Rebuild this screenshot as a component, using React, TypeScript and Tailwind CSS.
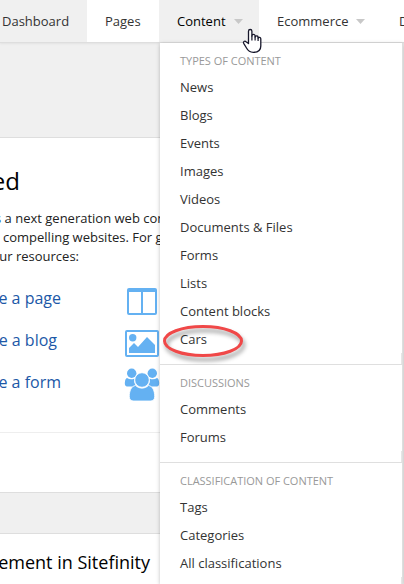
import type { ReactNode } from 'react';

const groups = [
  {
    title: 'TYPES OF CONTENT',
    items: ['News', 'Blogs', 'Events', 'Images', 'Videos', 'Documents & Files', 'Forms', 'Lists', 'Content blocks', 'Cars'],
  },
  { title: 'DISCUSSIONS', items: ['Comments', 'Forums'] },
  { title: 'CLASSIFICATION OF CONTENT', items: ['Tags', 'Categories', 'All classifications'] },
];

function Caret() {
  return (
    <svg width="9" height="5" viewBox="0 0 9 5" className="ml-2 shrink-0">
      <path d="M0 0h9L4.5 5z" fill="#c8c8c8" />
    </svg>
  );
}

function PageIcon() {
  return (
    <svg width="36" height="36" viewBox="0 0 36 36" fill="#64b1f2">
      <path fillRule="evenodd" d="M5 5h26a2 2 0 0 1 2 2v23a2 2 0 0 1-2 2H5a2 2 0 0 1-2-2V7a2 2 0 0 1 2-2zM5 9v21h12V9zM19 9v21h12V9z" />
    </svg>
  );
}

function ImageIcon() {
  return (
    <svg width="36" height="36" viewBox="0 0 36 36" fill="#64b1f2">
      <path fillRule="evenodd" d="M3 5h30a2 2 0 0 1 2 2v23a2 2 0 0 1-2 2H3a2 2 0 0 1-2-2V7a2 2 0 0 1 2-2zM3 7v23h30V7z" />
      <circle cx="8.7" cy="12.8" r="3.7" />
      <path d="M5 28v-5l5-5 4 4 9-10 8 8v8z" />
    </svg>
  );
}

function UsersIcon() {
  return (
    <svg width="36" height="36" viewBox="0 0 36 36" fill="#64b1f2">
      <circle cx="7.7" cy="6.2" r="4.7" />
      <circle cx="28.3" cy="6.2" r="4.7" />
      <path d="M3 11c2.500 1.700 5 1.700 7.500.5-.8 3.500 0 6 2.500 8H4c-3 0-3.500-2-3-5 .2-2 .8-3 2-3.500zM33 11c-2.500 1.700-5 1.700-7.500.5.8 3.500 0 6-2.500 8h9c3 0 3.500-2 3-5-.2-2-.8-3-2-3.500z" />
      <path d="M11.500 18.500c4 3.500 9 3.500 13 0 4.500.5 6.200 6 6.200 11 0 3-1.700 4.500-4.500 4.500H9.800c-2.800 0-4.500-1.500-4.500-4.500 0-5 1.700-10.500 6.200-11z" stroke="#fff" strokeWidth=".8" />
      <circle cx="18" cy="13" r="7.300" stroke="#fff" strokeWidth=".9" />
    </svg>
  );
}

function ResourceRow({ label, labelWidth, icon }: { label: string; labelWidth: string; icon: ReactNode }) {
  return (
    <div className="flex h-[42px] items-center">
      <div className="w-[124px]">
        <div className={`flex justify-end whitespace-nowrap text-base text-[#1c58a7] ${labelWidth}`}>{label}</div>
      </div>
      <div className="mt-[6px]">{icon}</div>
    </div>
  );
}

function Menu() {
  return (
    <div className="absolute left-[160px] top-[43px] h-[541px] w-[243px] border-r border-[#dedede] bg-white shadow-[0_1px_4px_rgba(0,0,0,0.25)]">
      {groups.map((group) => (
        <section key={group.title} className="border-b border-[#dfdfdf] pt-2">
          <h3 className="h-[22px] pl-5 text-[11px] leading-[19px] tracking-[-0.02px] text-[#999]">{group.title}</h3>
          <ul>
            {group.items.map((item) => (
              <li key={item} className="h-7 whitespace-nowrap pl-5 text-[13px] leading-7 text-[#333]">{item}</li>
            ))}
          </ul>
          <div className="h-[11px] border-r border-[#e6e6e6]" />
        </section>
      ))}
    </div>
  );
}

export default function App() {
  return (
    <div className="relative h-[584px] w-[404px] overflow-hidden bg-[#f0f0f0] font-['Open_Sans',sans-serif] text-[13px] text-black">
      <nav className="relative flex h-[43px] w-full overflow-hidden whitespace-nowrap border-b border-[#dedede] bg-white leading-[42px] text-[#333] shadow-[0_1px_2px_rgba(0,0,0,0.06)]">
        <div className="w-[87px] shrink-0 bg-[#f0f0f0] pl-[2px]">Dashboard</div>
        <div className="w-[72px] shrink-0 pl-[18px]">Pages</div>
        <div className="flex w-[100px] shrink-0 items-center bg-[#f0f0f0] pl-[18px] text-black">Content<Caret /></div>
        <div className="flex w-[122px] shrink-0 items-center pl-[18px]">Ecommerce<Caret /></div>
        <div className="shrink-0 pl-[18px]">Design</div>
      </nav>
      <main className="w-[402px]">
        <section className="mt-[94px] h-[356px] overflow-hidden whitespace-nowrap border-y border-[#dedede] bg-white">
          <h1 className="mt-[25px] flex h-9 w-5 items-center justify-end text-2xl">Get started</h1>
          <div className="mt-[10px] leading-[19px] text-[#222]">
            <p className="-ml-[5px]"><span className="text-[#1c58a7]">s</span> a next generation web content</p>
            <p className="ml-[3px]">compelling websites. For getting</p>
            <p className="flex w-[79px] justify-end">your resources:</p>
          </div>
          <div className="mt-[11px]">
            <ResourceRow label="Create a page" labelWidth="w-[61px]" icon={<PageIcon />} />
            <ResourceRow label="Create a blog" labelWidth="w-[57px]" icon={<ImageIcon />} />
            <ResourceRow label="Create a form" labelWidth="w-[61px]" icon={<UsersIcon />} />
          </div>
          <hr className="mt-[29px] border-[#eeeeee]" />
        </section>
        <section className="mt-10 h-[60px] border-t border-[#dedede] bg-white">
          <h2 className="flex w-[150px] justify-end whitespace-nowrap pt-[14px] text-lg leading-7">Management in Sitefinity</h2>
        </section>
      </main>
      <Menu />
      <svg className="absolute left-[155px] top-[315px]" width="100" height="50" viewBox="155 315 100 50">
        <ellipse cx="203" cy="341" rx="38.500" ry="14.500" fill="none" stroke="#f04848" strokeWidth="3" className="drop-shadow-[2px_4px_2px_rgba(0,0,0,0.4)]" />
      </svg>
      <svg className="absolute left-[242px] top-[28px]" width="20" height="26" viewBox="0 0 20 26">
        <path d="M6.500 15.500V3.200a1.700 1.700 0 0 1 3.400 0V8a1.600 1.600 0 0 1 3.200 0v1a1.600 1.600 0 0 1 3 0v1a1.500 1.500 0 0 1 2.700.8V18c0 4-3 6.300-7.500 6.300-3.800 0-5.300-1.500-6.800-4.300L1.700 15.300c-.8-1.600 1-2.800 2.300-1.600z" fill="#fff" stroke="#17172b" strokeWidth="1.300" strokeLinejoin="round" />
        <path d="M9.900 7.500v5M13.100 8.500v4M16.100 9.500v3.500" stroke="#17172b" strokeWidth="1.200" />
      </svg>
    </div>
  );
}
